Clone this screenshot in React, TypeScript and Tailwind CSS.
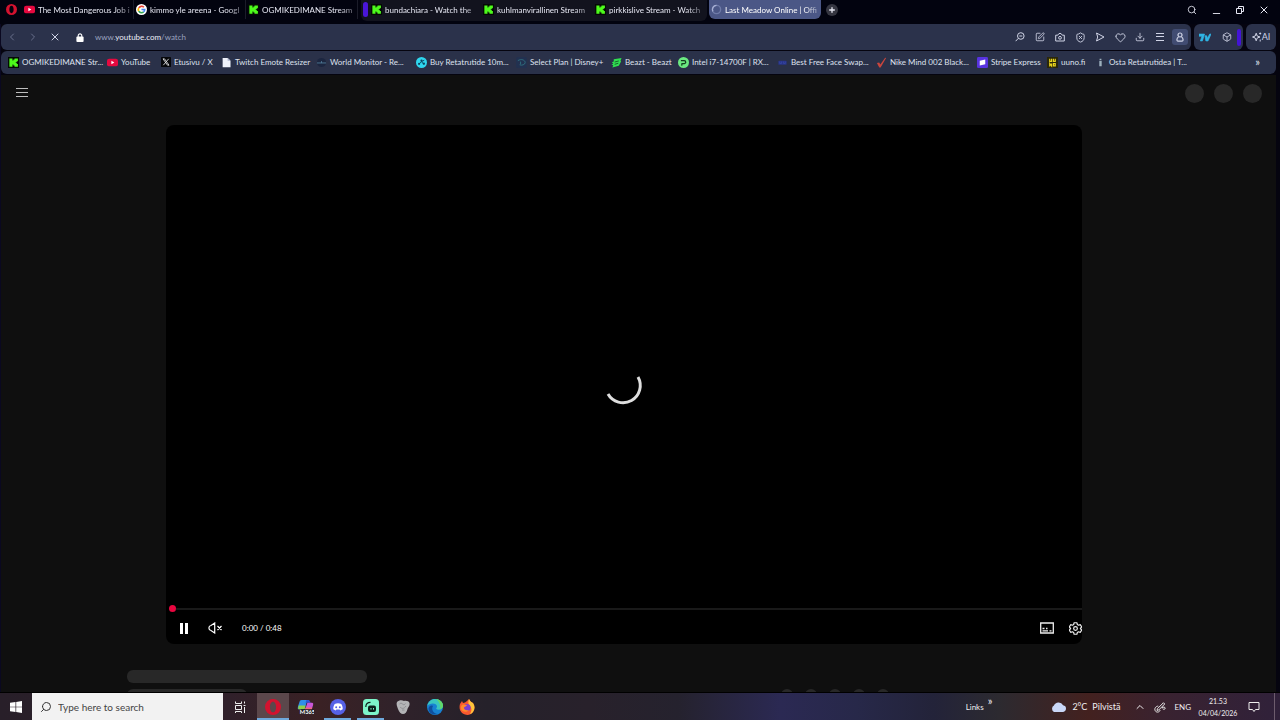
import type { ReactNode } from "react"
import {
  Box,
  ChevronLeft,
  ChevronRight,
  ChevronUp,
  Download,
  Heart,
  Minus,
  Plus,
  Search,
  ShieldX,
  SquarePen,
  X,
} from "lucide-react"

/* ---------- site icons ---------- */

const KickIcon = () => (
  <svg viewBox="0 0 12 12" className="size-[11px] shrink-0">
    <rect width="12" height="12" fill="#050b05" />
    <path d="M1.500 1.500h3.400v2.300h1V2.700h1.200V1.500h3.700v3H9.600v1.100H8.500v.9h1.100v1.100h1.200v3H7.100V9.400H5.900V8.200h-1v2.400H1.500z" fill="#4dfb1c" />
  </svg>
)

const YoutubeIcon = () => (
  <svg viewBox="0 0 12 12" className="size-[11px] shrink-0">
    <rect y="1.800" width="12" height="8.400" rx="2.400" fill="#e5093f" />
    <path d="M4.800 4.200 8 6 4.800 7.800z" fill="#fff" />
  </svg>
)

const GoogleIcon = () => (
  <svg viewBox="0 0 12 12" className="size-[11px] shrink-0">
    <circle cx="6" cy="6" r="6" fill="#fff" />
    <g fill="none" strokeWidth="1.800">
      <path d="M8.600 3.600A3.500 3.500 0 0 0 3 4.300" stroke="#ea4335" />
      <path d="M3 4.200a3.500 3.500 0 0 0 0 3.600" stroke="#fbbc05" />
      <path d="M3 7.700a3.500 3.500 0 0 0 5.300 1" stroke="#34a853" />
      <path d="M8.200 8.700A3.500 3.500 0 0 0 9.500 6H6" stroke="#4285f4" />
    </g>
  </svg>
)

const XIcon = () => (
  <svg viewBox="0 0 12 12" className="size-[10px] shrink-0">
    <rect width="12" height="12" rx="1" fill="#06070a" />
    <path d="M2.400 2.200h1.800l5.400 7.600H7.800zM9.200 2.200 2.800 9.800" fill="none" stroke="#e8e8ea" strokeWidth="1" />
  </svg>
)

const FileIcon = () => (
  <svg viewBox="0 0 12 12" className="size-[11px] shrink-0">
    <path d="M1.800 1h5.400L10.400 4v7.200H1.800z" fill="#eef1fa" />
    <path d="M7.200 1v3h3.200" fill="#aab2cc" />
  </svg>
)

const MonitorIcon = () => (
  <svg viewBox="0 0 12 12" className="size-[11px] shrink-0">
    <circle cx="6" cy="6" r="5" fill="#1c2640" />
    <path d="M1 6.500h10M6 4.500v2" fill="none" stroke="#4f7896" strokeWidth="1" />
  </svg>
)

const VialIcon = () => (
  <svg viewBox="0 0 12 12" className="size-[11px] shrink-0">
    <circle cx="6" cy="6" r="6" fill="#2fd6ee" />
    <path d="m3 8 3-3M6 5l3-1.500M6 5l2.500 3" stroke="#0b4560" strokeWidth="1" />
    <circle cx="3.400" cy="7.400" r="1.200" fill="#0b4560" />
    <circle cx="6" cy="4" r="1.200" fill="#0b4560" />
    <circle cx="8.600" cy="7.300" r="1.200" fill="#0b4560" />
  </svg>
)

const DisneyIcon = () => (
  <svg viewBox="0 0 12 12" className="size-[11px] shrink-0">
    <rect width="12" height="12" rx="2" fill="#223150" />
    <path d="M2 4c4-2.500 8-.5 8 2S6 9.500 4 8.500M5 5v3" fill="none" stroke="#2f7180" strokeWidth="1" />
  </svg>
)

const BeaztIcon = () => (
  <svg viewBox="0 0 12 12" className="size-[11px] shrink-0">
    <path d="M3 2.500 11.500 1 10.400 4 11 5 8.500 9.500 1.500 11.500l1-2.500L.5 8.500l2-1.200L1 5.800l2-.8z" fill="#2fe04f" />
    <path d="m4 5.500 4.500-1.200M4 8l4-1.200" stroke="#16452c" strokeWidth=".9" />
  </svg>
)

const ProIcon = () => (
  <svg viewBox="0 0 12 12" className="size-[11px] shrink-0">
    <circle cx="6" cy="6" r="6" fill="#6be981" />
    <path d="M3.200 4h3.600a1.600 1.600 0 0 1 0 3.200H4.400L4 9.500" fill="none" stroke="#12401f" strokeWidth="1.400" />
  </svg>
)

const FaceSwapIcon = () => (
  <svg viewBox="0 0 12 12" className="size-[11px] shrink-0">
    <rect x="1.500" y="4" width="9" height="4.500" rx="1" fill="#29358a" />
    <path d="M3 5v2h2V5m2 0v2h2V5" fill="none" stroke="#3a48a6" strokeWidth=".8" />
  </svg>
)

const CheckIcon = () => (
  <svg viewBox="0 0 12 12" className="size-[11px] shrink-0">
    <path d="M1 6.500 3.500 6l1.200 2.200L10 .8 11 1 5 11.500H3.600z" fill="#c9453d" />
  </svg>
)

const StripeIcon = () => (
  <svg viewBox="0 0 12 12" className="size-[11px] shrink-0">
    <rect width="12" height="12" rx="1.500" fill="#5833e0" />
    <path d="M3 4.200 9 2.800v5L3 9.200z" fill="#fff" />
  </svg>
)

const UunoIcon = () => (
  <svg viewBox="0 0 12 12" className="size-[11px] shrink-0">
    <rect width="12" height="12" fill="#2a270c" />
    <path d="M3 2v2.700h2V2M7 2v2.700h2V2M3 10.300V7.200l2 2.600V7M7 7.300h2v2.400H7z" fill="none" stroke="#e9d41e" strokeWidth="1.300" />
  </svg>
)

const PenIcon = () => (
  <svg viewBox="0 0 12 12" className="size-[11px] shrink-0">
    <path d="M5 2h2v1.200H5zM4.700 4h2.600v6H4.700z" fill="#9db0bd" />
  </svg>
)

const OperaIcon = ({ className }: { className: string }) => (
  <svg viewBox="0 0 12 12" className={className}>
    <path fillRule="evenodd" d="M6 0a6 6 0 1 0 0 12A6 6 0 0 0 6 0m0 2c1.500 0 2.300 1.900 2.300 4S7.500 10 6 10 3.700 8.100 3.700 6 4.500 2 6 2" fill="#d3122f" />
  </svg>
)

/* ---------- data ---------- */

const openTabs = [
  { title: "The Most Dangerous Job i", icon: <YoutubeIcon /> },
  { title: "kimmo yle areena - Googl", icon: <GoogleIcon /> },
  { title: "OGMIKEDIMANE Stream -", icon: <KickIcon /> },
]

const islandTabs = ["bundachiara - Watch the", "kuhlmanvirallinen Stream", "pirkkislive Stream - Watch"]

const bookmarks = [
  { title: "OGMIKEDIMANE Str...", icon: <KickIcon />, width: "w-[99px]" },
  { title: "YouTube", icon: <YoutubeIcon />, width: "w-[54px]" },
  { title: "Etusivu / X", icon: <XIcon />, width: "w-[60px]" },
  { title: "Twitch Emote Resizer", icon: <FileIcon />, width: "w-[95px]" },
  { title: "World Monitor - Re...", icon: <MonitorIcon />, width: "w-[100px]" },
  { title: "Buy Retatrutide 10m...", icon: <VialIcon />, width: "w-[100px]" },
  { title: "Select Plan | Disney+", icon: <DisneyIcon />, width: "w-[95px]" },
  { title: "Beazt - Beazt", icon: <BeaztIcon />, width: "w-[67px]" },
  { title: "Intel i7-14700F | RX...", icon: <ProIcon />, width: "w-[99px]" },
  { title: "Best Free Face Swap...", icon: <FaceSwapIcon />, width: "w-[99px]" },
  { title: "Nike Mind 002 Black...", icon: <CheckIcon />, width: "w-[101px]" },
  { title: "Stripe Express", icon: <StripeIcon />, width: "w-[70px]" },
  { title: "uuno.fi", icon: <UunoIcon />, width: "w-[48px]" },
  { title: "Osta Retatrutidea | T...", icon: <PenIcon />, width: "w-[100px]" },
]

const toolbarIcons = [
  {
    label: "Zoom out",
    icon: (
      <svg viewBox="0 0 10 10" className="size-[10px]" fill="none" stroke="currentColor" strokeWidth="1">
        <circle cx="5.800" cy="4" r="3.300" />
        <path d="M3.400 6.300.6 9.200M4.300 4h3" />
      </svg>
    ),
  },
  { label: "Edit page", icon: <SquarePen size={10} /> },
  {
    label: "Snapshot",
    icon: (
      <svg viewBox="0 0 10 10" className="size-[10px]" fill="none" stroke="currentColor" strokeWidth="1">
        <path d="M.7 3.200h2L4 1.500h2l1.300 1.700h2V9H.7z" strokeLinejoin="round" />
        <circle cx="5" cy="5.800" r="1.400" />
      </svg>
    ),
  },
  { label: "Blocker", icon: <ShieldX size={11} /> },
  {
    label: "Send to flow",
    icon: (
      <svg viewBox="0 0 10 10" className="size-[10px]" fill="none" stroke="currentColor">
        <path d="M1.500 1 9 5 1.500 9l1.200-4z" strokeLinejoin="round" />
      </svg>
    ),
  },
  { label: "Add to favourites", icon: <Heart size={11} /> },
  { label: "Downloads", icon: <Download size={10} /> },
  {
    label: "Easy setup",
    icon: (
      <svg viewBox="0 0 10 10" className="size-[10px]" stroke="currentColor" strokeWidth="1">
        <path d="M1 1.500h8M1 4.500h8M1 8.500h8" />
      </svg>
    ),
  },
]

/* ---------- browser chrome ---------- */

function TabLabel({ children }: { children: ReactNode }) {
  return (
    <span className="min-w-0 flex-1 whitespace-nowrap [mask-image:linear-gradient(to_right,black_84%,#0006)]">
      {children}
    </span>
  )
}

function TabBar() {
  return (
    <div className="flex h-6 items-start bg-[#02030f] text-[#e6e7f2]">
      <button aria-label="Opera menu" className="flex h-[19px] w-[22px] items-center justify-center">
        <OperaIcon className="size-[11px]" />
      </button>
      {openTabs.map((tab) => (
        <button key={tab.title} className="flex h-[19px] w-28 items-center gap-[3px] border-r border-[#1b1c29] pr-[3px] pl-[2px] text-left">
          {tab.icon}
          <TabLabel>{tab.title}</TabLabel>
        </button>
      ))}
      <div className="ml-[3px] flex h-[21px] w-[346px] items-start rounded-b-md bg-[#12131e]">
        <span className="mt-[2px] ml-[2px] h-[15px] w-[5px] shrink-0 rounded-full bg-[#4a16d8]" />
        {islandTabs.map((title) => (
          <button key={title} className="flex h-[19px] w-28 shrink-0 items-center gap-[3px] pr-[3px] pl-[3px] text-left">
            <KickIcon />
            <TabLabel>{title}</TabLabel>
          </button>
        ))}
      </div>
      <button className="ml-[2px] flex h-[19px] w-28 items-center gap-[3px] rounded-b-md bg-[#4b5786] pr-[3px] pl-[2px] text-left text-white">
        <svg viewBox="0 0 12 12" className="size-[11px] shrink-0">
          <circle cx="6" cy="6" r="4.500" fill="none" stroke="#6f7ba8" strokeWidth="1.500" />
          <path d="M2 8a4.500 4.500 0 0 1 4-6.500" fill="none" stroke="#a7b0d4" strokeWidth="1.500" />
        </svg>
        <TabLabel>Last Meadow Online | Offi</TabLabel>
      </button>
      <button aria-label="New tab" className="mt-[4px] ml-[5px] flex size-[12px] items-center justify-center rounded-full bg-[#353641]">
        <Plus size={8} strokeWidth={4} />
      </button>
      <div className="mr-1 ml-auto flex h-[19px] items-center">
        <button aria-label="Search tabs" className="flex w-6 justify-center"><Search size={10} /></button>
        <button aria-label="Minimise" className="flex w-6 justify-center pt-2"><Minus size={11} /></button>
        <button aria-label="Restore" className="flex w-6 justify-center">
          <svg viewBox="0 0 10 10" className="size-[10px]" fill="none" stroke="currentColor" strokeWidth="1">
            <path d="M1.500 3.500h5v5h-5zM3.500 3.500v-2h5v5h-2" />
          </svg>
        </button>
        <button aria-label="Close" className="flex w-6 justify-center"><X size={12} /></button>
      </div>
    </div>
  )
}

function Toolbar() {
  return (
    <div className="flex h-[26px] gap-[3px] text-[#d0d4e6]">
      <div className="flex flex-1 items-center rounded-md bg-[#2b324b]">
        <button aria-label="Back" className="flex w-[21px] justify-center text-[#69708c]"><ChevronLeft size={12} /></button>
        <button aria-label="Forward" className="flex w-[22px] justify-center text-[#69708c]"><ChevronRight size={12} /></button>
        <button aria-label="Stop loading" className="flex w-[22px] justify-center"><X size={12} /></button>
        <svg viewBox="0 0 8 10" className="mx-[10px] h-[9px] w-2">
          <path d="M2 5V3a2 2 0 0 1 4 0v2" fill="none" stroke="#fff" strokeWidth="1.200" />
          <rect y="4" width="8" height="6" rx="1" fill="#fff" />
        </svg>
        <div className="relative ml-px flex-1">
          <input aria-label="Address" defaultValue="www.youtube.com/watch" className="w-full bg-transparent text-transparent outline-none" />
          <span className="pointer-events-none absolute inset-0 text-[#9aa2bf]">
            www.<span className="text-[#eceef8]">youtube.com</span>/watch
          </span>
        </div>
        {toolbarIcons.map((item) => (
          <button key={item.label} aria-label={item.label} className="flex w-5 justify-center">{item.icon}</button>
        ))}
        <button aria-label="Profile" className="mr-[3px] ml-[2px] flex size-4 items-center justify-center rounded-[3px] bg-[#414c72]">
          <svg viewBox="0 0 10 10" className="size-[10px]" fill="none" stroke="currentColor" strokeWidth="1.200">
            <circle cx="5" cy="3" r="2" />
            <path d="M3.500 5C1.500 6 1.500 9.200 3 9.200h4C8.500 9.200 8.500 6 6.500 5" />
          </svg>
        </button>
      </div>
      <div className="flex w-[49px] items-center rounded-md bg-[#2b324b]">
        <button aria-label="7TV" className="flex w-[22px] justify-center">
          <svg viewBox="0 0 14 10" className="h-[9px] w-3">
            <path d="M0 1h6.500L4 9H1.600l1.800-5.500H0zM7 3h2l.8 3L12.500 1H14L10.500 9H8z" fill="#2fb4e4" stroke="#2fb4e4" strokeWidth=".8" />
          </svg>
        </button>
        <button aria-label="Extensions" className="flex w-[21px] justify-center"><Box size={10} /></button>
        <span className="h-[17px] w-[4px] rounded-full bg-[#4314d6]" />
      </div>
      <button className="flex w-[30px] items-center justify-center rounded-md bg-[#2b324b] text-[9px]">
        <svg viewBox="0 0 10 10" className="size-[10px]" fill="none" stroke="currentColor" strokeWidth="1">
          <path d="M4.200 1.200 5.200 4l2.800 1-2.800 1-1 2.800-1-2.800L.5 5l2.700-1zM8.200.5v2M7.200 1.500h2M8.200 7.500v2" strokeLinejoin="round" />
        </svg>
        AI
      </button>
    </div>
  )
}

function BookmarksBar() {
  return (
    <nav aria-label="Bookmarks" className="mt-px flex h-[23px] items-center rounded-md bg-[#2a3149] pb-px pl-[7px] text-[#dfe2ef]">
      {bookmarks.map((item) => (
        <a key={item.title} href="#" className={`flex shrink-0 items-center gap-[3px] whitespace-nowrap ${item.width}`}>
          {item.icon}
          {item.title}
        </a>
      ))}
      <button aria-label="More bookmarks" className="mr-[16px] ml-auto text-[11px] leading-3">»</button>
    </nav>
  )
}

/* ---------- page ---------- */

function Player() {
  return (
    <section className="mr-[194px] ml-[165px] flex aspect-[916/519] flex-col rounded-lg bg-black text-white">
      <div className="flex flex-1 items-center justify-center">
        <svg viewBox="0 0 40 40" className="mt-[45px] size-10">
          <path d="M34 9A17 17 0 0 1 4 26" fill="none" stroke="#dedede" strokeWidth="3" />
        </svg>
      </div>
      <div className="flex items-center pl-[3px]">
        <span className="size-[7px] rounded-full bg-[#e8063f]" />
        <span className="h-[2px] flex-1 bg-[#191919]" />
      </div>
      <div className="flex h-8 items-center">
        <button aria-label="Pause" className="ml-[14px] flex gap-[2px]">
          <span className="h-[11px] w-[3px] bg-white" />
          <span className="h-[11px] w-[3px] bg-white" />
        </button>
        <button aria-label="Unmute" className="ml-5">
          <svg viewBox="0 0 14 12" className="h-3 w-[14px]" fill="none" stroke="#fff" strokeWidth="1.200">
            <path d="M6.700 1v10L3 8.500C.2 8 .2 4 3 3.500zM9.500 4l4 4M13.500 4l-4 4" />
          </svg>
        </button>
        <span className="ml-5">0:00 / 0:48</span>
        <button aria-label="Subtitles" className="mr-[15px] ml-auto">
          <svg viewBox="0 0 14 12" className="h-3 w-[14px]" fill="none" stroke="#eee" strokeWidth="1.300">
            <path d="M.7 1h12.600v10H.7zM2.500 6.500h2M6 6.500h1.500M2.500 8.800H8M9.500 8.800h2" />
          </svg>
        </button>
        <button aria-label="Settings">
          <svg viewBox="0 0 14 14" className="size-[13px]" fill="none" stroke="#eee" strokeWidth="1.300" strokeLinejoin="round">
            <path d="M5.500.8h3l.5 2 1.200.7 2-.6 1.500 2.500L12.300 7l1.400 1.600-1.500 2.500-2-.6-1.200.7-.5 2h-3l-.5-2-1.200-.7-2 .6L.3 8.600 1.700 7 .3 5.400l1.500-2.500 2 .6L5 2.800z" />
            <circle cx="7" cy="7" r="2" />
          </svg>
        </button>
      </div>
    </section>
  )
}

function Page() {
  return (
    <main className="mt-px min-h-0 flex-1 overflow-hidden bg-[#0f0f0f]">
      <header className="flex h-[37px] items-center justify-between pr-[14px] pl-[15px]">
        <button aria-label="Guide" className="mb-[2px] flex h-[9px] w-3 flex-col justify-between">
          <span className="h-px w-full bg-[#bdbdbd]" />
          <span className="h-px w-full bg-[#bdbdbd]" />
          <span className="h-px w-full bg-[#bdbdbd]" />
        </button>
        <div className="flex gap-[10px]">
          <span className="size-[19px] rounded-full bg-[#282828]" />
          <span className="size-[19px] rounded-full bg-[#282828]" />
          <span className="size-[19px] rounded-full bg-[#282828]" />
        </div>
      </header>
      <div className="h-[13px]" />
      <Player />
      <div className="mt-[26px] ml-[126px] h-[13px] w-60 rounded-md bg-[#282828]" />
      <div className="mt-[6px] ml-[126px] flex">
        <span className="h-[13px] w-[120px] rounded-md bg-[#282828]" />
        <div className="ml-[534px] flex gap-3">
          {[0, 1, 2, 3, 4].map((dot) => (
            <span key={dot} className="size-3 rounded-full bg-[#282828]" />
          ))}
        </div>
      </div>
    </main>
  )
}

/* ---------- taskbar ---------- */

function TaskbarApp({ label, state, children }: { label: string; state?: "active" | "open"; children: ReactNode }) {
  return (
    <button
      aria-label={label}
      className={`flex h-full items-center justify-center border-y-2 border-t-transparent ${
        state === "active"
          ? "w-8 border-b-[#6fa9dc] bg-[#5b474b]"
          : state === "open"
            ? "mx-[3px] w-[27px] border-b-[#6fa9dc]"
            : "w-8 border-b-transparent"
      }`}
    >
      {children}
    </button>
  )
}

function Taskbar() {
  return (
    <footer className="flex h-7 shrink-0 items-center border-t border-black bg-[linear-gradient(90deg,#281f29_0%,#30202a_18%,#3a2124_25%,#30222a_31%,#25212a_38%,#28212b_46%,#25222e_53%,#2b2953_61%,#272849_67%,#232339_73%,#2c2a30_78%,#43211f_85%,#392230_91%,#30213a_100%)] pr-[5px] text-[9px] text-[#f0eef0]">
      <button aria-label="Start" className="flex h-full w-8 items-center justify-center">
        <svg viewBox="0 0 12 12" className="size-3" fill="#fff">
          <path d="M0 1.800 5.500 1v4.700H0zM6.200.9 12 0v5.700H6.200zM0 6.300h5.500V11L0 10.200zM6.200 6.300H12V12l-5.800-.9z" />
        </svg>
      </button>
      <label className="flex h-full w-[191px] items-center gap-[6px] bg-[#f2f2f2] pl-2 text-[#333]">
        <Search size={12} className="-scale-x-100" />
        <input aria-label="Search" placeholder="Type here to search" className="min-w-0 flex-1 bg-transparent text-[10px] outline-none placeholder:text-[#444]" />
      </label>
      <button aria-label="Task view" className="mx-px flex h-full w-8 items-center justify-center">
        <svg viewBox="0 0 12 12" className="size-3" fill="none" stroke="#eee" strokeWidth="1">
          <path d="M1.500.5v2h6v-2M1.500 4.500h6v4h-6zM1.500 12v-1.500h6V12M10.500.5v2M10.500 6v6M9.500 4.500h2" />
        </svg>
      </button>
      <TaskbarApp label="Opera" state="active">
        <OperaIcon className="size-4" />
      </TaskbarApp>
      <TaskbarApp label="Copilot">
        <svg viewBox="0 0 18 18" className="size-[17px]">
          <path d="M5 2h6L8 12H2C0 12 1 9 2 6s1-4 3-4" fill="#2f8fe8" />
          <path d="M2 8h7l-1 4H2C1 12 1 10 2 8" fill="#8fd04a" />
          <path d="M10 2h2c2 0 2 3 3 3H9z" fill="#2b56d8" />
          <path d="M11 5h5c2 0 1 3 0 6s-1 3-3 3H8z" fill="#c857d8" />
          <path d="m9 10 7 0-1 4H8z" fill="#ef6a78" />
          <rect x="4" y="12" width="14" height="5" rx="1" fill="#1d1b20" />
          <text x="11" y="17" textAnchor="middle" fontSize="6" fontWeight="700" fill="#fff">M365</text>
        </svg>
      </TaskbarApp>
      <TaskbarApp label="Discord" state="open">
        <svg viewBox="0 0 16 16" className="size-4">
          <circle cx="8" cy="8" r="8" fill="#5661e6" />
          <path d="M4.700 5c2-1 4.600-1 6.600 0 1.200 2 1.500 3.500 1.400 5.300l-2.400 1.200-.7-1H6.400l-.7 1-2.400-1.200C3.200 8.500 3.500 7 4.700 5" fill="#fff" />
          <circle cx="6.200" cy="8.300" r="1" fill="#5661e6" />
          <circle cx="9.800" cy="8.300" r="1" fill="#5661e6" />
        </svg>
      </TaskbarApp>
      <TaskbarApp label="Streamlabs" state="open">
        <svg viewBox="0 0 16 16" className="size-4">
          <rect width="16" height="16" rx="3.500" fill="#7df5ca" />
          <rect x="5" y="6.500" width="8" height="6.500" rx="2" fill="#0c201b" />
          <path d="M8 9v1.600M10.500 9v1.600" stroke="#7df5ca" strokeWidth="1" />
          <path d="M2.800 8c0-3 1.700-4.700 4.700-4.700" fill="none" stroke="#0c201b" strokeWidth="1.200" />
        </svg>
      </TaskbarApp>
      <TaskbarApp label="Game">
        <svg viewBox="0 0 16 16" className="size-4">
          <path d="M2 3c2-2 5-2 7-1 2-.5 5 0 5.500 2 .5 3-1.500 4-2 6-.5 3-2.500 5-4.500 5s-4-2-5-5-2-5-1-7" fill="#b4b4b6" />
          <path d="M4.500 5c1-1 2-1 3 0s2 1 3-.5M5 8c2 2 4 2 6-1M7 11h2.500" fill="none" stroke="#8e8e92" strokeWidth="1" />
        </svg>
      </TaskbarApp>
      <TaskbarApp label="Edge">
        <svg viewBox="0 0 16 16" className="size-4">
          <circle cx="8" cy="8" r="8" fill="#1781d2" />
          <path d="M.3 7C1 2.700 4.300 0 8 0c4.700 0 8 3.300 8 6.600 0 2.500-2 4.200-4.500 4.200-1.500 0-2.300-.6-2.300-1.200 0-.5.800-.8.800-2C10 5.700 8 4.500 5.800 4.500 3.500 4.500 1.300 5.500.3 7" fill="#39c5c0" />
          <path d="M9 .1c4.200.4 7 3.400 7 6.500 0 2-1.300 3.600-3.200 4C14 8 13 3 9 .1" fill="#61d869" />
          <path d="M6 7c-2 3 0 7.500 4.500 8-5 1.500-9-1.500-9-5.500C2 7 4 6 6 7" fill="#0f4f9f" />
        </svg>
      </TaskbarApp>
      <TaskbarApp label="Firefox">
        <svg viewBox="0 0 16 16" className="size-4">
          <path d="M1 5 3 2l1 2 2-.5L8 2l2-2c1 2 2 3 4 4 2 3 2 6 0 9-2 2.500-5 3.500-8 2.500C2 14.500-.5 10.500 1 5" fill="#f9582f" />
          <path d="M10 0c1 2 2 3 4 4 2 3 2 6 0 9-1 1-2 2-3 2 2-3 2-6 0-8S9 3 10 0" fill="#ffc53a" />
          <circle cx="8" cy="8.500" r="3.600" fill="#7a3fd0" />
          <path d="M3 6c2-1 3 0 5 0-1 2-3 1.500-3 3s2 3 5 2c-2 3-7 2-8-1-.5-2 0-3 1-4" fill="#ff8a2a" />
        </svg>
      </TaskbarApp>

      <div className="ml-auto flex h-full items-center">
        <span className="text-[8px]">Links</span>
        <button aria-label="More links" className="mb-3 ml-[4px] text-[11px] leading-3">»</button>
        <button className="ml-[58px] flex items-center gap-[5px]">
          <svg viewBox="0 0 18 12" className="h-[11px] w-[17px]">
            <path d="M4 12a4 4 0 0 1 0-7 5.500 5.500 0 0 1 10-.5A3.800 3.800 0 0 1 14 12z" fill="#c9d7f7" />
          </svg>
          <span>2°C</span>
          <span>Pilvistä</span>
        </button>
        <ChevronUp size={12} className="ml-[14px]" />
        <svg viewBox="0 0 14 14" className="mx-[8px] size-3" fill="none" stroke="#eee" strokeWidth="1.100">
          <path d="m4 9 7-7 1.500 1.500-7 7L3.500 11zM5 6C2 6 0 9 1.500 11.500S7 13 7 10.500M9 8c2-1.500 4-1 4 .5S11 10 10 9" />
        </svg>
        <span className="text-[8px]">ENG</span>
        <div className="mr-[2px] ml-[7px] w-10 text-center text-[7px] leading-3">
          <div>21.53</div>
          <div>04/04/2026</div>
        </div>
        <button aria-label="Notifications" className="mx-[8px]">
          <svg viewBox="0 0 12 12" className="size-3" fill="none" stroke="#eee" strokeWidth="1">
            <path d="M1 1.500h10v7H7.500L6 10.500l-1.500-2H1z" />
          </svg>
        </button>
        <span className="ml-[6px] h-full w-px bg-[#6d5c6d]" />
      </div>
    </footer>
  )
}

export default function App() {
  return (
    <div className="flex h-screen flex-col overflow-hidden bg-[#05040f] font-['Lato','Open_Sans',sans-serif] text-[8px] leading-3">
      <TabBar />
      <div className="flex min-h-0 flex-1 flex-col border-l border-[#0a0820] pr-[4px]">
        <Toolbar />
        <BookmarksBar />
        <Page />
      </div>
      <Taskbar />
    </div>
  )
}
